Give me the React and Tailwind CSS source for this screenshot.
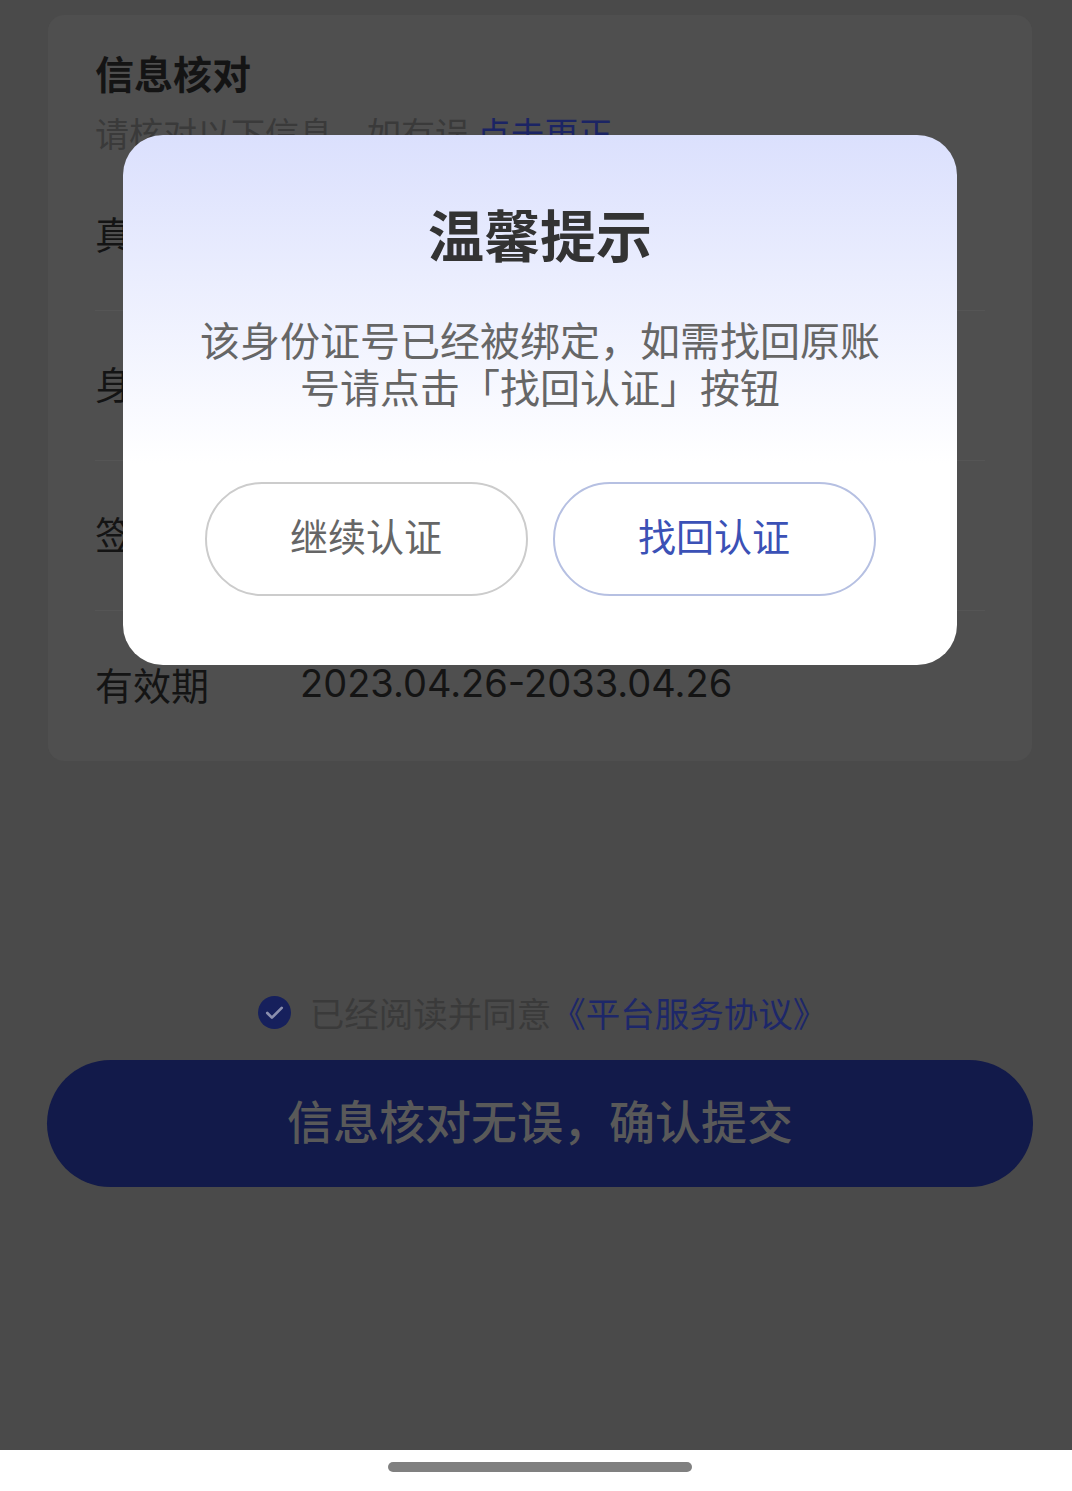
import React from 'react';

const font = { fontFamily: '"Noto Sans CJK SC", "Noto Sans", sans-serif' };
const numFont = { fontFamily: 'Inter, "Noto Sans CJK SC", sans-serif' };

const rows = [
  { label: '真实姓名', value: '王**' },
  { label: '身份证号', value: '3301**********2516' },
  { label: '签发机关', value: '杭州市公安局' },
  { label: '有效期', value: '2023.04.26-2033.04.26' },
];

const InfoRow = ({ label, value, last }) => (
  <div
    className={`flex items-center h-[150px] pb-[6px] ${
      last ? '' : 'border-b border-[#555555]'
    }`}
  >
    <span className="w-[205px] shrink-0 text-[38px] text-[#141414]">{label}</span>
    <span className="text-[38px] text-[#141414]" style={numFont}>
      {value}
    </span>
  </div>
);

const CheckIcon = () => (
  <svg width="33" height="33" viewBox="0 0 32 32">
    <circle cx="16" cy="16" r="16" fill="#16205c" />
    <path
      d="M9 16.5l4.5 4.5L23 11.5"
      fill="none"
      stroke="#8b8fae"
      strokeWidth="2.6"
      strokeLinecap="round"
      strokeLinejoin="round"
    />
  </svg>
);

const TipDialog = () => (
  <div className="absolute left-[123px] top-[135px] w-[834px] h-[530px] rounded-[40px] bg-gradient-to-b from-[#dbe0fd] via-[#ffffff] via-[62%] to-[#ffffff] flex flex-col items-center pt-[61px]">
    <h3 className="text-[56px] leading-[73px] font-bold text-[#333333]">温馨提示</h3>
    <p className="mt-[47px] w-[700px] text-center text-[40px] leading-[47px] text-[#666666]">
      该身份证号已经被绑定，如需找回原账号请点击「找回认证」按钮
    </p>
    <div className="mt-[72px] flex gap-[25px]">
      <button className="w-[323px] h-[114px] pb-[9px] rounded-full border-2 border-[#cccccc] bg-white text-[38px] text-[#666666]">
        继续认证
      </button>
      <button className="w-[323px] h-[114px] pb-[9px] rounded-full border-2 border-[#b6c0e2] bg-white text-[38px] text-[#3b51b6]">
        找回认证
      </button>
    </div>
  </div>
);

export default function App() {
  return (
    <div className="relative w-[1072px] h-[1491px] bg-white overflow-hidden" style={font}>
      <div className="w-[1080px]">
        <div className="h-[1450px] bg-[#4a4a4a] pt-[15px]">
          <div className="mx-[48px] bg-[#4f4f4f] rounded-[16px] px-[47px] pt-[32px]">
            <h2 className="text-[39px] leading-[50px] font-semibold text-[#141414]">信息核对</h2>
            <p className="mt-[15px] text-[34px] leading-[42px] text-[#3a3a3a]">
              请核对以下信息，如有误 <span className="text-[#1b2464]">点击更正</span>
            </p>
            <div className="mt-[7px]">
              {rows.map((r, i) => (
                <InfoRow key={r.label} {...r} last={i === rows.length - 1} />
              ))}
            </div>
          </div>

          <div className="mt-[229px] pl-[5px] flex items-center justify-center gap-[19px]">
            <CheckIcon />
            <span className="text-[34.5px] leading-[44px] text-[#3a3a3a]">
              已经阅读并同意<span className="text-[#1d2769]">《平台服务协议》</span>
            </span>
          </div>

          <div className="mt-[26px] mx-[47px]">
            <button className="w-full h-[127px] pb-[8px] rounded-full bg-[#121a4a] text-[46px] font-medium text-[#595959]">
              信息核对无误，确认提交
            </button>
          </div>
        </div>

        <div className="h-[41px] flex items-start justify-center pt-[12px]">
          <div className="w-[304px] h-[10px] rounded-full bg-[#808080]" />
        </div>
      </div>

      <TipDialog />
    </div>
  );
}
